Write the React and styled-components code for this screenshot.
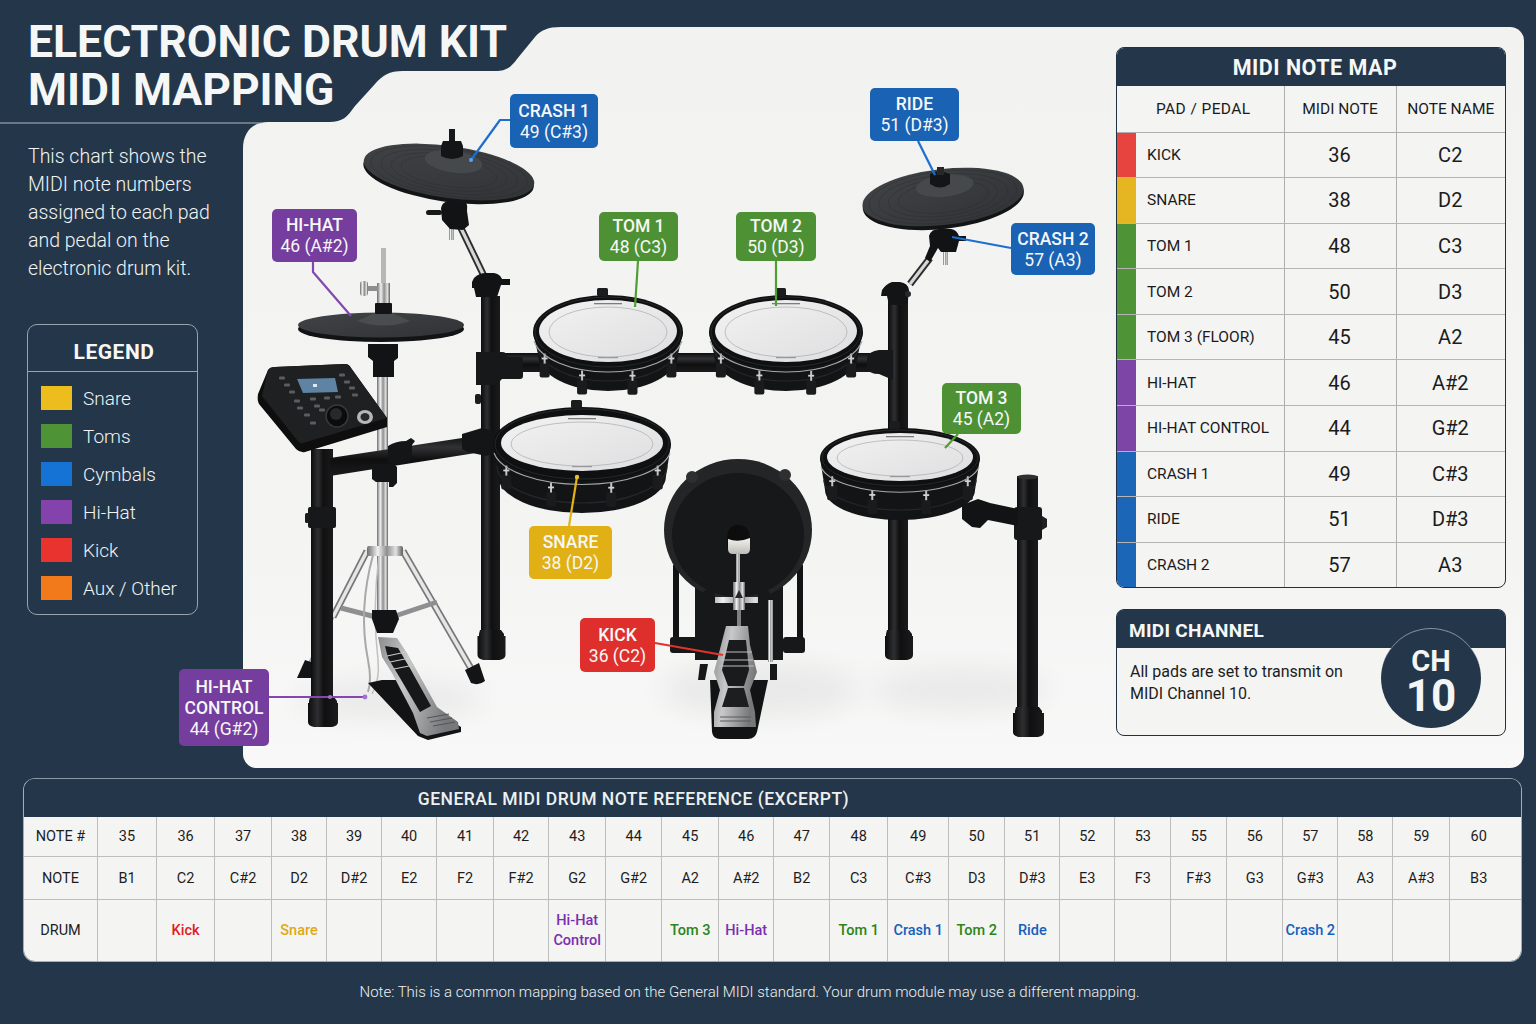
import React from 'react';
import styled, { createGlobalStyle } from 'styled-components';

const NAVY = '#24374a';
const TONES = {
  blue: '#1a62b4',
  purple: '#753d9e',
  green: '#4e9135',
  gold: '#e0b014',
  red: '#de2f2c',
};
const CANVAS_X = 243;
const CANVAS_Y = 27;

const GlobalStyle = createGlobalStyle`
  html, body { margin: 0; padding: 0; background: ${NAVY}; }
  body { font-family: Roboto, Inter, "Liberation Sans", sans-serif; }
`;

const Page = styled.div`
  width: 1536px;
  height: 1024px;
  overflow: hidden;
  background: ${NAVY};
`;

const Top = styled.div`
  display: flex;
  height: 768px;
  padding-right: 12px;
`;

const Sidebar = styled.aside`
  position: relative;
  z-index: 2;
  flex: 0 0 243px;
  width: 243px;
  pointer-events: none;
`;

const Title = styled.h1`
  margin: 0;
  padding: 18px 0 0 28px;
  height: 122px;
  box-sizing: border-box;
  font-size: 44.5px;
  line-height: 48px;
  font-weight: 700;
  white-space: nowrap;
  color: #f5f6f6;
`;

const Divider = styled.div`
  width: 262px;
  height: 2px;
  background: rgba(190, 200, 208, 0.45);
`;

const Intro = styled.p`
  margin: 19px 0 0 28px;
  width: 200px;
  font-size: 19.5px;
  line-height: 28px;
  font-weight: 300;
  color: #f1f3f4;
`;

const Legend = styled.section`
  margin: 41px 0 0 27px;
  width: 171px;
  height: 291px;
  box-sizing: border-box;
  border: 1.5px solid #97a3ad;
  border-radius: 10px;
`;

const LegendTitle = styled.h2`
  margin: 0;
  height: 47px;
  box-sizing: border-box;
  padding: 14px 0 0 3px;
  border-bottom: 1.5px solid #97a3ad;
  text-align: center;
  font-size: 21px;
  line-height: 26px;
  font-weight: 700;
  letter-spacing: 0.5px;
  color: #f5f6f6;
`;

const LegendList = styled.ul`
  list-style: none;
  margin: 0;
  padding: 14px 0 0 13px;
  display: flex;
  flex-direction: column;
  gap: 14px;
`;

const LegendItem = styled.li`
  display: flex;
  align-items: center;
  gap: 11px;
  height: 24px;
  font-size: 19px;
  font-weight: 300;
  color: #f1f3f4;
`;

const Swatch = styled.span`
  width: 31px;
  height: 24px;
  background: ${p => p.$color};
`;

const Panel = styled.main`
  position: relative;
  z-index: 1;
  flex: 1;
  margin-top: 27px;
  display: flex;
  background: linear-gradient(180deg, #f2f2f1 0%, #f4f4f3 70%, #f8f8f8 100%);
  border-radius: 14px;
`;

const Notch = styled.svg`
  position: absolute;
  top: 0;
  left: 0;
  z-index: 2;
`;

const Canvas = styled.div`
  position: relative;
  flex: 0 0 873px;
  height: 741px;
`;

const KitDrawing = styled.svg`
  display: block;
`;

const Callout = styled.div`
  position: absolute;
  z-index: 3;
  left: ${p => p.$x - CANVAS_X}px;
  top: ${p => p.$y - CANVAS_Y}px;
  width: ${p => p.$w}px;
  height: ${p => p.$h}px;
  padding-top: 1px;
  box-sizing: border-box;
  display: flex;
  flex-direction: column;
  align-items: center;
  justify-content: center;
  border-radius: 5px;
  background: ${p => TONES[p.$tone]};
  color: #f6f7f7;
  font-size: 17.5px;
  line-height: 21px;
  text-align: center;
  white-space: nowrap;
`;

const CalloutName = styled.span`
  font-weight: 500;
`;

const SideColumn = styled.div`
  flex: 0 0 390px;
  padding-top: 20px;
  display: flex;
  flex-direction: column;
  gap: 21px;
`;

const MapCard = styled.section`
  height: 541px;
  box-sizing: border-box;
  border: 1.5px solid #1f3143;
  border-radius: 8px;
  overflow: hidden;
  background: #f4f4f3;
`;

const CardBar = styled.h2`
  margin: 0;
  background: ${NAVY};
  color: #f6f7f7;
  height: 38px;
  line-height: 40px;
  padding-left: 8px;
  text-align: center;
  font-size: 21.5px;
  font-weight: 700;
  letter-spacing: 0.5px;
`;

const MapTable = styled.table`
  width: 100%;
  height: 501px;
  border-collapse: collapse;
  table-layout: fixed;
`;

const MapHead = styled.th`
  font-size: 15.5px;
  font-weight: 400;
  color: #1b1b1b;
  border-left: 1.5px solid #aeaeae;
  border-bottom: 1.5px solid #aeaeae;
  padding: 0;
  &:first-child { border-left: 0; padding-left: 6px; letter-spacing: 0.4px; }
`;

const Strip = styled.td`
  padding: 0;
  background: ${p => p.$color};
  border-bottom: 1.5px solid #b5b5b5;
`;

const PadCell = styled.td`
  padding: 0 0 0 11px;
  font-size: 15.5px;
  color: #1b1b1b;
  white-space: nowrap;
  border-bottom: 1.5px solid #b5b5b5;
`;

const ValueCell = styled.td`
  padding: 0 1px 0 0;
  text-align: center;
  font-size: 20px;
  color: #1b1b1b;
  border-left: 1.5px solid #aeaeae;
  border-bottom: 1.5px solid #b5b5b5;
`;

const MapRow = styled.tr`
  &:last-child td { border-bottom: 0; }
`;

const ChannelCard = styled.section`
  position: relative;
  height: 127px;
  box-sizing: border-box;
  border: 1.5px solid #1f3143;
  border-radius: 8px;
  background: #f4f4f3;
`;

const ChannelBar = styled.h2`
  margin: 0;
  height: 38px;
  padding-left: 12px;
  background: ${NAVY};
  border-radius: 6px 6px 0 0;
  color: #f6f7f7;
  font-size: 19px;
  line-height: 42px;
  font-weight: 700;
  letter-spacing: 0.3px;
`;

const ChannelText = styled.p`
  margin: 13px 0 0 13px;
  width: 240px;
  font-size: 16px;
  line-height: 22px;
  color: #1c1c1c;
`;

const ChannelBadge = styled.div`
  position: absolute;
  top: 18px;
  right: 24px;
  width: 100px;
  height: 100px;
  border-radius: 50%;
  background: ${NAVY};
  box-shadow: inset 0 1px 0 rgba(255, 255, 255, 0.45);
  display: flex;
  flex-direction: column;
  align-items: center;
  padding-top: 19px;
  box-sizing: border-box;
  color: #f4f5f5;
  font-weight: 700;
`;

const BadgeLabel = styled.span`
  font-size: 29px;
  line-height: 28px;
`;

const BadgeNumber = styled.span`
  font-size: 44px;
  line-height: 42px;
`;

const Reference = styled.section`
  margin: 10px 0 0 23px;
  width: 1499px;
  height: 184px;
  box-sizing: border-box;
  border: 1.5px solid #a4aeb6;
  border-top-color: #8c99a4;
  border-radius: 12px;
  overflow: hidden;
`;

const ReferenceBar = styled.h2`
  margin: 0;
  height: 38px;
  line-height: 41px;
  text-align: center;
  padding-right: 278px;
  font-size: 17.5px;
  font-weight: 500;
  letter-spacing: 0.5px;
  color: #eef0f1;
  background: ${NAVY};
`;

const RefTable = styled.table`
  width: 100%;
  border-collapse: collapse;
  table-layout: fixed;
  background: #f4f4f3;
`;

const RefRow = styled.tr`
  height: ${p => p.$h}px;
`;

const RefCell = styled.td`
  padding: 2px ${p => (p.$last ? '14px' : '0')} 0 0;
  text-align: center;
  font-size: 14.5px;
  line-height: 20px;
  font-weight: ${p => (p.$tone ? 500 : 400)};
  color: ${p => p.$tone || '#1d1d1d'};
  border-left: 1px solid #bdbdbd;
  border-bottom: 1.5px solid #bdbdbd;
  &:first-child { border-left: 0; }
`;

const RefLast = styled(RefRow)`
  td { border-bottom: 0; }
`;

const Footnote = styled.p`
  margin: 21px 0 0;
  padding-right: 37px;
  text-align: center;
  font-size: 15px;
  line-height: 18px;
  font-weight: 300;
  color: #eef0f1;
`;

const LEGEND = [
  ['Snare', '#ecbd1c'],
  ['Toms', '#4e9335'],
  ['Cymbals', '#1673d6'],
  ['Hi-Hat', '#8443ac'],
  ['Kick', '#e8332f'],
  ['Aux / Other', '#f37a1b'],
];

const NOTE_MAP = [
  ['KICK', '36', 'C2', '#e8443f'],
  ['SNARE', '38', 'D2', '#e6b522'],
  ['TOM 1', '48', 'C3', '#4e9335'],
  ['TOM 2', '50', 'D3', '#4e9335'],
  ['TOM 3 (FLOOR)', '45', 'A2', '#4e9335'],
  ['HI-HAT', '46', 'A#2', '#7d46a6'],
  ['HI-HAT CONTROL', '44', 'G#2', '#7d46a6'],
  ['CRASH 1', '49', 'C#3', '#1c66b8'],
  ['RIDE', '51', 'D#3', '#1c66b8'],
  ['CRASH 2', '57', 'A3', '#1c66b8'],
];

const CALLOUTS = [
  { x: 510, y: 94, w: 88, h: 54, tone: 'blue', name: ['CRASH 1'], note: '49 (C#3)' },
  { x: 870, y: 88, w: 89, h: 53, tone: 'blue', name: ['RIDE'], note: '51 (D#3)' },
  { x: 272, y: 209, w: 85, h: 53, tone: 'purple', name: ['HI-HAT'], note: '46 (A#2)' },
  { x: 599, y: 212, w: 79, h: 49, tone: 'green', name: ['TOM 1'], note: '48 (C3)' },
  { x: 736, y: 212, w: 80, h: 49, tone: 'green', name: ['TOM 2'], note: '50 (D3)' },
  { x: 1011, y: 223, w: 84, h: 52, tone: 'blue', name: ['CRASH 2'], note: '57 (A3)' },
  { x: 942, y: 383, w: 79, h: 51, tone: 'green', name: ['TOM 3'], note: '45 (A2)' },
  { x: 529, y: 526, w: 83, h: 53, tone: 'gold', name: ['SNARE'], note: '38 (D2)' },
  { x: 580, y: 618, w: 75, h: 54, tone: 'red', name: ['KICK'], note: '36 (C2)' },
  { x: 179, y: 669, w: 90, h: 77, tone: 'purple', name: ['HI-HAT', 'CONTROL'], note: '44 (G#2)' },
];

const LEADERS = [
  ['510,120 500,120 471,160', '#1d6fcf'],
  ['918,141 935,175', '#1d6fcf'],
  ['313,262 313,272 351,316', '#8447b0'],
  ['638,261 635,307', '#4f9e33'],
  ['776,261 776,306', '#4f9e33'],
  ['1011,248 952,237', '#1d6fcf'],
  ['958,434 945,448', '#4f9e33'],
  ['569,526 577,477', '#e3b315'],
  ['655,643 723,655', '#e3322c'],
  ['269,697 365,697', '#8447b0'],
];

const REF_WIDTHS = [73.5, 59, 58, 57, 55, 55, 55, 57, 55, 57, 56, 57, 55, 56, 58, 61, 56, 55, 55, 56, 56, 56, 55, 55, 57, 71];
const REF_NUMBERS = ['35', '36', '37', '38', '39', '40', '41', '42', '43', '44', '45', '46', '47', '48', '49', '50', '51', '52', '53', '55', '56', '57', '58', '59', '60'];
const REF_NOTES = ['B1', 'C2', 'C#2', 'D2', 'D#2', 'E2', 'F2', 'F#2', 'G2', 'G#2', 'A2', 'A#2', 'B2', 'C3', 'C#3', 'D3', 'D#3', 'E3', 'F3', 'F#3', 'G3', 'G#3', 'A3', 'A#3', 'B3'];
const REF_DRUMS = {
  36: ['Kick', '#e11d1d'],
  38: ['Snare', '#e0a911'],
  43: ['Hi-Hat Control', '#7a2fb0'],
  45: ['Tom 3', '#2c8517'],
  46: ['Hi-Hat', '#7a2fb0'],
  48: ['Tom 1', '#2c8517'],
  49: ['Crash 1', '#1560bd'],
  50: ['Tom 2', '#2c8517'],
  51: ['Ride', '#1560bd'],
  57: ['Crash 2', '#1560bd'],
};

const Gradients = () => (
  <defs>
    <linearGradient id="tube" x1="0" x2="1" y1="0" y2="0">
      <stop offset="0" stopColor="#0c0c0d" />
      <stop offset="0.32" stopColor="#2e2f31" />
      <stop offset="0.55" stopColor="#101011" />
      <stop offset="1" stopColor="#1b1b1d" />
    </linearGradient>
    <linearGradient id="tubeH" x1="0" x2="0" y1="0" y2="1">
      <stop offset="0" stopColor="#0e0e0f" />
      <stop offset="0.3" stopColor="#313234" />
      <stop offset="0.6" stopColor="#0f0f10" />
      <stop offset="1" stopColor="#1b1b1d" />
    </linearGradient>
    <linearGradient id="chrome" x1="0" x2="1" y1="0" y2="0">
      <stop offset="0" stopColor="#6d6d6f" />
      <stop offset="0.3" stopColor="#f1f1f1" />
      <stop offset="0.55" stopColor="#8f8f91" />
      <stop offset="0.8" stopColor="#e2e2e2" />
      <stop offset="1" stopColor="#5e5e60" />
    </linearGradient>
    <linearGradient id="plate" x1="0" x2="1" y1="0" y2="0.3">
      <stop offset="0" stopColor="#8b8c8e" />
      <stop offset="0.4" stopColor="#c9c9ca" />
      <stop offset="1" stopColor="#77787a" />
    </linearGradient>
    <linearGradient id="cymbalTop" x1="0" x2="1" y1="0" y2="1">
      <stop offset="0" stopColor="#414447" />
      <stop offset="1" stopColor="#303235" />
    </linearGradient>
    <linearGradient id="head" x1="0" x2="1" y1="0" y2="1">
      <stop offset="0" stopColor="#f2f2f2" />
      <stop offset="1" stopColor="#dedee0" />
    </linearGradient>
    <linearGradient id="beater" x1="0" x2="0" y1="0" y2="1">
      <stop offset="0" stopColor="#f3f2ee" />
      <stop offset="1" stopColor="#bdbcb7" />
    </linearGradient>
    <filter id="soft" x="-40%" y="-120%" width="180%" height="340%">
      <feGaussianBlur stdDeviation="14" />
    </filter>
  </defs>
);

const Post = ({ x, w, top, bottom, foot }) => (
  <g>
    <rect x={x} y={top} width={w} height={bottom - top} fill="url(#tube)" />
    <path
      d={`M${x - 1} ${bottom - 28} h${w + 2} l3 4 v2 l${(foot - w) / 2 - 3} 0 v19 q0 4 -6 5 h${-foot + 12} q-6 -1 -6 -5 v-19 l${(foot - w) / 2 - 3} 0 v-2 z`}
      fill="url(#tube)"
    />
  </g>
);

const Cymbal = ({ cx, cy, rx, ry, rot, bellY = -11, bellX = 3 }) => (
  <g transform={`rotate(${rot} ${cx} ${cy})`}>
    <ellipse cx={cx} cy={cy + 3} rx={rx} ry={ry} fill="#131416" />
    <ellipse cx={cx} cy={cy} rx={rx} ry={ry - 1} fill="url(#cymbalTop)" />
    {[0.92, 0.8, 0.68, 0.56].map(k => (
      <ellipse key={k} cx={cx} cy={cy} rx={rx * k} ry={(ry - 1) * k} fill="none" stroke="#2a2c2e" strokeWidth="0.4" />
    ))}
    <ellipse cx={cx + bellX} cy={cy + bellY} rx={29} ry={11} fill="#46494c" />
  </g>
);

const LUGS = [-0.88, -0.36, 0.34, 0.88];

const DrumPad = ({ cx, cy, rx, ry, depth, headRx, headRy }) => (
  <g>
    <path
      d={`M${cx - rx} ${cy} L${cx - rx + 5} ${cy + depth} A${rx - 5} ${ry} 0 0 0 ${cx + rx - 5} ${cy + depth} L${cx + rx} ${cy} Z`}
      fill="#131415"
    />
    <path
      d={`M${cx - rx + 4} ${cy + depth - 10} A${rx - 4} ${ry} 0 0 0 ${cx + rx - 4} ${cy + depth - 10}`}
      fill="none"
      stroke="#26272a"
      strokeWidth="1.2"
    />
    {LUGS.map(t => {
      const x = cx + t * (rx - 3);
      const y = cy + ry * Math.sqrt(1 - t * t);
      return (
        <g key={t}>
          <rect x={x - 5} y={y + 13} width="10" height="15" rx="2" fill="#1a1b1d" />
          <rect x={x - 1} y={y + 4} width="2" height="10" fill="#c4c4c5" />
          <rect x={x - 3} y={y + 8} width="6" height="1.8" fill="#d2d2d3" />
        </g>
      );
    })}
    <path
      d={`M${cx - rx + 1} ${cy + 9} A${rx} ${ry} 0 0 0 ${cx + rx - 1} ${cy + 9}`}
      fill="none"
      stroke="#a9a9aa"
      strokeWidth="1.1"
    />
    <ellipse cx={cx} cy={cy} rx={rx} ry={ry} fill="#0f1011" />
    <ellipse cx={cx} cy={cy} rx={rx - 2} ry={ry - 2} fill="none" stroke="#2c2d2f" strokeWidth="0.8" />
    <rect x={cx - 11} y={cy - ry - 7} width="11" height="8" rx="1.5" fill="#1b1c1e" />
    <ellipse cx={cx} cy={cy - 1} rx={headRx} ry={headRy} fill="url(#head)" />
    <ellipse cx={cx} cy={cy} rx={headRx - 10} ry={headRy - 6} fill="none" stroke="#ababac" strokeWidth="0.7" />
    <rect x={cx - 14} y={cy - headRy + 2} width="28" height="1.3" fill="#7c7c7d" />
    <rect x={cx - 10} y={cy + headRy - 6} width="20" height="1.2" fill="#98989a" />
  </g>
);

const MODULE_KEYS = [
  [282, 378], [287, 385], [292, 392], [342, 375], [347, 382], [352, 388],
  [297, 401], [313, 399], [327, 398], [338, 397], [355, 395], [300, 408],
  [317, 406], [307, 415], [313, 423], [322, 410],
];

const DrumModule = () => (
  <g>
    <path d="M268 370 Q270 367 275 367 L345 364 Q349 364 351 368 L387 418 L387 427 L305 452 Q300 453 296 449 L259 404 Q257 400 258 394 Z" fill="#0e0e0f" />
    <path d="M268 370 Q270 367 275 367 L345 364 Q349 364 351 368 L387 418 L303 443 Q300 444 297 440 L262 396 Z" fill="#1f2022" />
    <path d="M297 379 L335 378 L338 392 L303 393 Z" fill="#5f84a3" />
    <rect x="313" y="384" width="4" height="3" fill="#dfe8ee" />
    {MODULE_KEYS.map(([x, y]) => (
      <rect key={`${x}-${y}`} x={x - 3} y={y - 1.5} width="6" height="3" rx="1" fill="#5b5d60" />
    ))}
    <circle cx="337" cy="416" r="11" fill="#0c0c0d" stroke="#38393b" strokeWidth="1.5" />
    <circle cx="336" cy="414" r="6" fill="#29292b" />
    <ellipse cx="365" cy="417" rx="8" ry="7" fill="#b6b7b8" />
    <ellipse cx="365" cy="417" rx="4.5" ry="4" fill="#2a2a2c" />
  </g>
);

const Kit = () => (
  <KitDrawing width="873" height="741" viewBox={`${CANVAS_X} ${CANVAS_Y} 873 741`}>
    <Gradients />

    {/* floor shadows */}
    <g filter="url(#soft)" fill="#000" opacity="0.05">
      <ellipse cx="390" cy="700" rx="95" ry="20" />
      <ellipse cx="760" cy="690" rx="100" ry="28" />
      <ellipse cx="960" cy="690" rx="90" ry="22" />
    </g>

    {/* back frame */}
    <Post x={481} w={19} top={296} bottom={658} foot={28} />
    <Post x={888} w={20} top={300} bottom={658} foot={28} />
    <rect x="498" y="353" width="390" height="19" fill="url(#tubeH)" />
    <path d="M476 352 h26 q5 0 5 5 h13 q3 0 3 3 v16 q0 3 -3 3 h-18 l-6 6 h-20 z" fill="#17181a" />
    <path d="M893 350 h-14 q-10 1 -12 8 v10 q2 6 12 6 l14 6 z" fill="#17181a" />
    <rect x="475" y="394" width="6" height="10" rx="2" fill="#1b1c1e" />

    {/* crash 1 arm */}
    <path d="M459 224 L484 276" stroke="#2b2c2e" strokeWidth="7" />
    <path d="M459 224 L484 276" stroke="#d6d6d7" strokeWidth="3.2" />
    <path d="M449 228 h5 v12 h-5 z" fill="url(#chrome)" />
    <path d="M441 208 q1 -6 8 -7 l15 0 q4 2 3 10 l2 14 l-6 5 l-13 -1 l-8 -9 z" fill="#121314" />
    <rect x="426" y="210" width="16" height="5" rx="2.5" fill="#17181a" />
    <path d="M474 278 q5 -5 12 -5 h8 q6 1 8 6 h8 v6 h-9 l-4 12 h-21 l-2 -9 h-2 v-6 z" fill="#121314" />
    <Cymbal cx={449} cy={172} rx={86} ry={27} rot={8} />
    <rect x="449" y="129" width="6" height="12" fill="#17181a" />
    <path d="M443 141 h18 l2 5 v10 q-11 6 -22 0 v-10 z" fill="#141516" />

    {/* ride arm */}
    <path d="M930 258 L910 284" stroke="#2b2c2e" strokeWidth="7" />
    <path d="M930 258 L910 284" stroke="#d6d6d7" strokeWidth="3.2" />
    <path d="M943 250 h5 v15 h-5 z" fill="url(#chrome)" />
    <path d="M929 236 q2 -7 10 -7 h12 q6 1 8 7 h7 v5 h-7 l-3 11 h-15 l-3 -4 l-8 14 l-5 -4 l5 -12 z" fill="#121314" />
    <path d="M882 290 q4 -6 10 -8 h8 q8 1 9 8 l-1 10 l-1 5 h-18 l-2 -9 h-6 z" fill="#131415" />
    <circle cx="908" cy="294" r="3" fill="#29292b" />
    <Cymbal cx={943} cy={197} rx={81} ry={29} rot={-6.5} />
    <path d="M930 174 q10 -5 20 0 v10 q-10 7 -20 0 z" fill="#141516" />
    <rect x="937" y="167" width="7" height="8" fill="#26272a" />

    {/* hi-hat stand, behind the module and bar */}
    <rect x="377" y="375" width="11" height="250" fill="url(#chrome)" />
    <path d="M367 551 L333 617" stroke="#77777a" strokeWidth="7" />
    <path d="M367 551 L333 617" stroke="#e6e6e6" strokeWidth="3.5" />
    <path d="M333 617 L305 672" stroke="#a4a4a6" strokeWidth="3" />
    <path d="M403 551 L473 672" stroke="#77777a" strokeWidth="7" />
    <path d="M403 551 L473 672" stroke="#e6e6e6" strokeWidth="3.5" />
    <path d="M341 608 L376 617" stroke="#8f8f91" strokeWidth="5" />
    <path d="M437 602 L392 617" stroke="#8f8f91" strokeWidth="5" />
    <path d="M373 555 Q358 610 368 660 Q372 680 368 692" fill="none" stroke="#a9a9ab" strokeWidth="2" />
    <path d="M379 555 Q372 610 378 660 Q380 680 372 694" fill="none" stroke="#c0c0c2" strokeWidth="1.5" />
    <rect x="367" y="546" width="36" height="10" rx="2" fill="url(#chrome)" />
    <path d="M372 610 h24 l3 9 l-6 14 h-16 l-5 -14 z" fill="#131415" />
    <path d="M297 678 l8 -18 l9 3 l-2 15 z" fill="#131415" />
    <path d="M465 670 l14 -7 l6 18 q-6 5 -14 2 z" fill="#131415" />

    {/* left frame */}
    <Post x={311} w={22} top={449} bottom={725} foot={30} />
    <rect x="308" y="507" width="28" height="21" rx="2" fill="#17181a" />
    <rect x="305" y="513" width="4" height="10" rx="1.5" fill="#1b1c1e" />
    <path d="M330 458 L482 435 L482 452 L330 476 Z" fill="url(#tubeH)" />
    <path d="M388 446 q8 -5 18 -5 l5 -3 l4 3 l-3 4 v14 q-6 5 -18 6 l-6 -2 z" fill="#141516" />
    <path d="M462 434 l20 -6 l12 3 v22 l-8 3 l-18 -4 l-6 -3 z" fill="#141516" />
    <path d="M372 464 h22 l3 3 v16 l-4 4 h-4 v-5 h-13 l-4 -3 z" fill="#141516" />

    <DrumModule />

    {/* hi-hat */}
    <rect x="381" y="248" width="5" height="36" fill="#b7b7b8" />
    <rect x="377" y="283" width="13" height="20" fill="url(#chrome)" />
    <path d="M366 286 h12 v5 h-12 z" fill="#8e8e90" />
    <rect x="360" y="281" width="8" height="15" rx="3" fill="url(#chrome)" />
    <path d="M368 344 h30 v14 l-4 3 v16 h-21 v-16 l-5 -4 z" fill="#121314" />
    <ellipse cx="381" cy="329" rx="83" ry="13" fill="#121314" />
    <ellipse cx="381" cy="325" rx="83" ry="12.5" fill="url(#cymbalTop)" />
    <path d="M357 321 L375 313 H392 L410 321 Q384 330 357 321 Z" fill="#4a4d50" />
    <rect x="375" y="303" width="17" height="11" rx="1" fill="#131415" />

    {/* drums */}
    <DrumPad cx={608} cy={332} rx={75} ry={37} depth={22} headRx={69} headRy={31} />
    <DrumPad cx={786} cy={332} rx={77} ry={37} depth={22} headRx={71} headRy={31} />
    <DrumPad cx={582} cy={444} rx={89} ry={37} depth={32} headRx={81} headRy={28} />

    {/* tom 3 and its post */}
    <Post x={1017} w={21} top={476} bottom={735} foot={31} />
    <ellipse cx="1027.5" cy="477" rx="10.5" ry="2.5" fill="#2f3032" />
    <rect x="1014" y="507" width="28" height="33" rx="3" fill="#17181a" />
    <path d="M1042 516 l5 3 v8 l-5 3 z" fill="#1f2022" />
    <path d="M962 505 l16 -6 l12 4 l28 6 l0 17 l-30 -6 l-8 8 l-8 -1 l-10 -8 z" fill="#121314" />
    <DrumPad cx={900} cy={458} rx={80} ry={30} depth={32} headRx={73} headRy={24} />

    {/* kick */}
    <rect x="673" y="565" width="6" height="75" fill="#121314" />
    <rect x="797" y="565" width="6" height="75" fill="#121314" />
    <rect x="670" y="637" width="36" height="16" rx="3" fill="#17181a" />
    <rect x="783" y="637" width="22" height="16" rx="3" fill="#17181a" />
    <rect x="695" y="585" width="88" height="75" fill="#17181a" />
    <ellipse cx="738" cy="530" rx="74" ry="71" fill="#242527" />
    <ellipse cx="738" cy="535" rx="66" ry="62" fill="#17181a" />
    <circle cx="692" cy="477" r="6" fill="#2e2f31" />
    <circle cx="785" cy="475" r="6" fill="#2e2f31" />
    <path d="M727 540 q0 -15 11 -15 q12 0 12 15 v8 h-23 z" fill="#0d0d0e" />
    <path d="M728 539 q10 4 22 -1 v11 q0 5 -5 5 h-12 q-5 0 -5 -5 z" fill="url(#beater)" />
    <rect x="736" y="553" width="4" height="32" fill="url(#chrome)" />
    <rect x="703" y="597" width="66" height="6" fill="url(#chrome)" />
    <rect x="703" y="590" width="12" height="24" rx="4" fill="#17181a" />
    <rect x="758" y="590" width="12" height="24" rx="4" fill="#17181a" />
    <path d="M733 582 h12 v28 h-12 z" fill="url(#chrome)" />
    <path d="M739 590 l4 8 h-8 z" fill="#26272a" />
    <rect x="737" y="610" width="4" height="18" fill="#808082" />
    <rect x="768" y="600" width="5" height="62" fill="url(#chrome)" />
    <path d="M700 664 h8 l-3 16 h-7 z M770 664 h7 v16 h-7 z" fill="#17181a" />

    {/* kick pedal */}
    <g>
      <path d="M710 680 L768 680 L757 732 Q755 739 748 739 H720 Q713 739 712 732 Z" fill="#121314" />
      <path d="M726 626 L748 626 L750 645 L757 672 L750 690 L755 712 L756 727 L714 727 L714 712 L720 690 L714 672 Z" fill="url(#plate)" />
      <path d="M729 640 L746 640 L749 670 L744 686 L728 686 L722 670 Z" fill="#1a1b1d" />
      <path d="M728 688 L744 688 L749 707 L722 707 Z" fill="#1d1e20" />
      <path d="M721 652 H752 M720 660 H753 M719 666 H754" stroke="#bdbdbd" strokeWidth="1.2" />
      <path d="M720 717 H751 M720 721 H751" stroke="#5a5b5d" strokeWidth="1.2" />
    </g>

    {/* hi-hat pedal */}
    <g>
      <path d="M368 683 L382 680 L410 680 L428 707 L461 727 L461 732 L428 740 L418 736 Z" fill="#121314" />
      <path d="M378 637 L397 638 L407 653 L422 680 L437 707 L458 722 L459 729 L427 736 L420 733 L413 713 L392 673 L382 657 Z" fill="url(#plate)" />
      <path d="M385 646 L398 648 L411 670 L431 706 L420 712 L400 678 L388 658 Z" fill="#17181a" />
      <path d="M387 656 L406 652 M390 662 L410 658 M394 669 L414 665" stroke="#c9c9c9" strokeWidth="1.2" />
      <path d="M427 718 L449 714 M430 722 L452 718 M433 726 L455 722" stroke="#55565a" strokeWidth="1.2" />
    </g>

    {/* leader lines */}
    {LEADERS.map(([points, color]) => (
      <polyline key={points} points={points} fill="none" stroke={color} strokeWidth="2.2" strokeLinejoin="round" />
    ))}
    <circle cx="330" cy="697" r="2" fill="#a56fd0" />
    <circle cx="365" cy="697" r="2.4" fill="#a56fd0" />
    <circle cx="577" cy="477" r="2.2" fill="#e9bf2a" />
    <circle cx="471" cy="160" r="2" fill="#5aa5f0" />
  </KitDrawing>
);

const PanelCorner = () => (
  <Notch width="330" height="125" viewBox="0 0 330 125">
    <path
      d="M-1 -1 H325 V0 H318 C305 0 298 3 292 10 L274 32 C268 40 264 44 252 44 H160 C146 44 140 48 132 57 L112 79 C104 90 100 95 86 95 H25 C10 95 0 105 0 122 H-1 Z"
      fill={NAVY}
    />
  </Notch>
);

const NoteMap = () => (
  <MapCard>
    <CardBar>MIDI NOTE MAP</CardBar>
    <MapTable>
      <colgroup>
        <col style={{ width: 19 }} />
        <col style={{ width: 148 }} />
        <col style={{ width: 112 }} />
        <col />
      </colgroup>
      <thead>
        <tr style={{ height: 46 }}>
          <MapHead colSpan={2}>PAD / PEDAL</MapHead>
          <MapHead>MIDI NOTE</MapHead>
          <MapHead>NOTE NAME</MapHead>
        </tr>
      </thead>
      <tbody>
        {NOTE_MAP.map(([pad, note, name, color]) => (
          <MapRow key={pad}>
            <Strip $color={color} />
            <PadCell>{pad}</PadCell>
            <ValueCell>{note}</ValueCell>
            <ValueCell>{name}</ValueCell>
          </MapRow>
        ))}
      </tbody>
    </MapTable>
  </MapCard>
);

const ReferenceTable = () => (
  <Reference>
    <ReferenceBar>GENERAL MIDI DRUM NOTE REFERENCE (EXCERPT)</ReferenceBar>
    <RefTable>
      <colgroup>
        {REF_WIDTHS.map((w, i) => (
          <col key={i} style={{ width: w }} />
        ))}
      </colgroup>
      <tbody>
        <RefRow $h={39}>
          <RefCell>NOTE #</RefCell>
          {REF_NUMBERS.map((n, i) => (
            <RefCell key={n} $last={i === REF_NUMBERS.length - 1}>{n}</RefCell>
          ))}
        </RefRow>
        <RefRow $h={43}>
          <RefCell>NOTE</RefCell>
          {REF_NOTES.map((n, i) => (
            <RefCell key={n} $last={i === REF_NOTES.length - 1}>{n}</RefCell>
          ))}
        </RefRow>
        <RefLast $h={62}>
          <RefCell>DRUM</RefCell>
          {REF_NUMBERS.map(n => {
            const drum = REF_DRUMS[n];
            return <RefCell key={n} $tone={drum && drum[1]}>{drum && drum[0]}</RefCell>;
          })}
        </RefLast>
      </tbody>
    </RefTable>
  </Reference>
);

const App = () => (
  <Page>
    <GlobalStyle />
    <Top>
      <Sidebar>
        <Title>
          ELECTRONIC DRUM KIT
          <br />
          MIDI MAPPING
        </Title>
        <Divider />
        <Intro>This chart shows the MIDI note numbers assigned to each pad and pedal on the electronic drum kit.</Intro>
        <Legend>
          <LegendTitle>LEGEND</LegendTitle>
          <LegendList>
            {LEGEND.map(([label, color]) => (
              <LegendItem key={label}>
                <Swatch $color={color} />
                {label}
              </LegendItem>
            ))}
          </LegendList>
        </Legend>
      </Sidebar>
      <Panel>
        <PanelCorner />
        <Canvas>
          <Kit />
          {CALLOUTS.map(c => (
            <Callout key={c.note} $x={c.x} $y={c.y} $w={c.w} $h={c.h} $tone={c.tone}>
              {c.name.map(line => (
                <CalloutName key={line}>{line}</CalloutName>
              ))}
              <span>{c.note}</span>
            </Callout>
          ))}
        </Canvas>
        <SideColumn>
          <NoteMap />
          <ChannelCard>
            <ChannelBar>MIDI CHANNEL</ChannelBar>
            <ChannelText>All pads are set to transmit on MIDI Channel 10.</ChannelText>
            <ChannelBadge>
              <BadgeLabel>CH</BadgeLabel>
              <BadgeNumber>10</BadgeNumber>
            </ChannelBadge>
          </ChannelCard>
        </SideColumn>
      </Panel>
    </Top>
    <ReferenceTable />
    <Footnote>Note: This is a common mapping based on the General MIDI standard. Your drum module may use a different mapping.</Footnote>
  </Page>
);

export default App;
